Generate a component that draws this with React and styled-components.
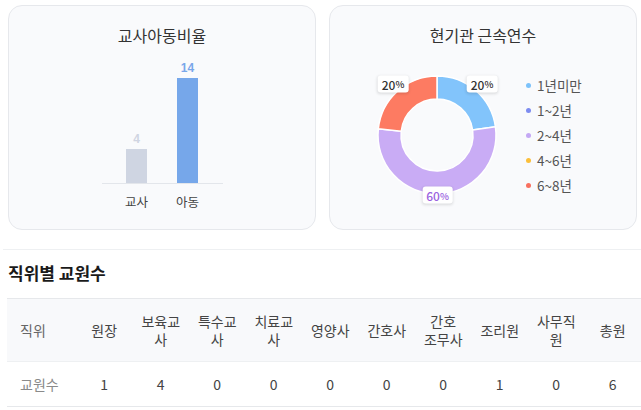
import React from "react";
import styled, { createGlobalStyle } from "styled-components";

const Global = createGlobalStyle`
  html, body { margin: 0; padding: 0; background: #ffffff; }
  body { font-family: "Noto Sans CJK KR", "Noto Sans", sans-serif; color: #333; }
  * { box-sizing: border-box; }
`;

const Page = styled.div`
  width: 641px;
  height: 410px;
  overflow: hidden;
  padding-top: 5px;
`;

const Cards = styled.div`
  display: grid;
  grid-template-columns: 308px 308px;
  gap: 13px;
  padding-left: 8px;
`;

const Card = styled.div`
  height: 225px;
  border: 1px solid #e6e8ec;
  border-radius: 14px;
  background: #f9fafc;
  padding-top: 17px;
  display: flex;
  flex-direction: column;
`;

const CardTitle = styled.div`
  font-size: 16px;
  line-height: 24px;
  text-align: center;
  color: #333;
`;

/* ---------- bar chart ---------- */
const BarArea = styled.div`
  margin: 0 auto;
  width: 121px;
  height: 137px;
  display: flex;
  justify-content: center;
  align-items: flex-end;
  gap: 30px;
  border-bottom: 1px solid #e3e6eb;
`;

const BarCol = styled.div`
  width: 21px;
  display: flex;
  flex-direction: column;
  align-items: center;
`;

const BarValue = styled.div`
  font-family: "Liberation Sans", Arial, sans-serif;
  font-weight: 700;
  font-size: 12px;
  line-height: 14px;
  margin-bottom: 3px;
  color: ${(p) => p.$color};
`;

const Bar = styled.div`
  width: 21px;
  height: ${(p) => p.$h}px;
  background: ${(p) => p.$color};
`;

const BarLabels = styled.div`
  margin: 9px auto 0;
  display: flex;
  justify-content: center;
  gap: 26px;
`;

const BarLabel = styled.div`
  width: 25px;
  text-align: center;
  font-size: 12.5px;
  line-height: 18px;
  color: #444;
`;

/* ---------- donut ---------- */
const DonutRow = styled.div`
  display: flex;
  align-items: center;
  margin-top: 13px;
  padding-left: 32px;
  gap: 14px;
`;

const ChartBox = styled.div`
  position: relative;
  width: 150px;
  height: 150px;
  flex: none;
`;

const PctTag = styled.div`
  position: absolute;
  transform: translate(-50%, -50%);
  background: #fff;
  border-radius: 3px;
  box-shadow: 0 1px 3px rgba(0, 0, 0, 0.12);
  padding: 0 4px;
  height: 17px;
  display: flex;
  align-items: center;
  font-size: 12px;
  font-weight: 500;
  color: ${(p) => p.$color || "#333"};
  white-space: nowrap;
  & small { font-size: 9.5px; font-weight: 500; }
`;

const Legend = styled.ul`
  list-style: none;
  margin: 0;
  padding: 0;
  display: flex;
  flex-direction: column;
  gap: 7px;
`;

const LegendItem = styled.li`
  display: flex;
  align-items: center;
  gap: 6px;
  font-size: 13.5px;
  line-height: 18px;
  color: #555;
`;

const Dot = styled.span`
  width: 5px;
  height: 5px;
  border-radius: 50%;
  background: ${(p) => p.$color};
`;

/* ---------- table section ---------- */
const Section = styled.section`
  margin-top: 19px;
  margin-left: 3px;
  border-top: 1px solid #eef0f2;
  padding: 11px 0 0 4px;
`;

const SectionTitle = styled.h3`
  margin: 0 0 13px 1px;
  font-size: 17px;
  line-height: 24px;
  font-weight: 700;
  color: #1a1a1a;
`;

const Table = styled.table`
  width: 634px;
  table-layout: fixed;
  border-collapse: collapse;
  font-size: 14px;
  line-height: 18px;
`;

const HeadRow = styled.tr`
  background: #f8f9fb;
  border-top: 1px solid #e6e8eb;
  border-bottom: 1px solid #eef0f2;
`;

const BodyRow = styled.tr`
  border-bottom: 1px solid #e6e8eb;
`;

const Th = styled.th`
  font-weight: 400;
  padding: 13px 6px;
  text-align: ${(p) => (p.$first ? "left" : "center")};
  padding-left: ${(p) => (p.$first ? "13px" : "6px")};
  color: ${(p) => (p.$first ? "#666" : "#444")};
  vertical-align: middle;
  word-break: ${(p) => (p.$keep ? "keep-all" : "normal")};
`;

const Td = styled.td`
  padding: 13px 6px;
  text-align: ${(p) => (p.$first ? "left" : "center")};
  padding-left: ${(p) => (p.$first ? "13px" : "6px")};
  color: ${(p) => (p.$first ? "#8a8a8a" : "#444")};
`;

const pt = (cx, cy, r, a) => {
  const rad = (a * Math.PI) / 180;
  return [cx + r * Math.sin(rad), cy - r * Math.cos(rad)];
};

const arc = (cx, cy, ro, ri, a0, a1) => {
  const large = a1 - a0 > 180 ? 1 : 0;
  const [x0, y0] = pt(cx, cy, ro, a0);
  const [x1, y1] = pt(cx, cy, ro, a1);
  const [x2, y2] = pt(cx, cy, ri, a1);
  const [x3, y3] = pt(cx, cy, ri, a0);
  return `M${x0} ${y0} A${ro} ${ro} 0 ${large} 1 ${x1} ${y1} L${x2} ${y2} A${ri} ${ri} 0 ${large} 0 ${x3} ${y3} Z`;
};

const slices = [
  { from: 0, to: 82, color: "#82c4fb" },
  { from: 82, to: 276, color: "#c9acf5" },
  { from: 276, to: 360, color: "#fd7b62" },
];

const legend = [
  { label: "1년미만", color: "#7cc2fa" },
  { label: "1~2년", color: "#7d8cf0" },
  { label: "2~4년", color: "#c4a8f4" },
  { label: "4~6년", color: "#fbbf3a" },
  { label: "6~8년", color: "#f8705f" },
];

const headers = ["직위", "원장", "보육교사", "특수교사", "치료교사", "영양사", "간호사", "간호 조무사", "조리원", "사무직원", "총원"];
const values = ["교원수", "1", "4", "0", "0", "0", "0", "0", "1", "0", "6"];

export default function App() {
  return (
    <Page>
      <Global />
      <Cards>
        <Card>
          <CardTitle>교사아동비율</CardTitle>
          <BarArea>
            <BarCol>
              <BarValue $color="#d0d5e2">4</BarValue>
              <Bar $h={34} $color="#cfd5e2" />
            </BarCol>
            <BarCol>
              <BarValue $color="#79a7ea">14</BarValue>
              <Bar $h={105} $color="#76a7ea" />
            </BarCol>
          </BarArea>
          <BarLabels>
            <BarLabel>교사</BarLabel>
            <BarLabel>아동</BarLabel>
          </BarLabels>
        </Card>
        <Card>
          <CardTitle>현기관 근속연수</CardTitle>
          <DonutRow>
            <ChartBox>
              <svg width="150" height="150" viewBox="0 0 150 150">
                {slices.map((s) => (
                  <path
                    key={s.from}
                    d={arc(75, 75, 59, 36, s.from, s.to)}
                    fill={s.color}
                    stroke="#ffffff"
                    strokeWidth="1.5"
                  />
                ))}
              </svg>
              <PctTag style={{ left: 120, top: 23.5 }}>
                20<small>%</small>
              </PctTag>
              <PctTag style={{ left: 31, top: 23.5 }}>
                20<small>%</small>
              </PctTag>
              <PctTag $color="#9a62e0" style={{ left: 75.5, top: 135 }}>
                60<small>%</small>
              </PctTag>
            </ChartBox>
            <Legend>
              {legend.map((l) => (
                <LegendItem key={l.label}>
                  <Dot $color={l.color} />
                  {l.label}
                </LegendItem>
              ))}
            </Legend>
          </DonutRow>
        </Card>
      </Cards>
      <Section>
        <SectionTitle>직위별 교원수</SectionTitle>
        <Table>
          <colgroup>
            <col style={{ width: 69 }} />
            {headers.slice(1).map((h) => (
              <col key={h} style={{ width: 56.5 }} />
            ))}
          </colgroup>
          <thead>
            <HeadRow>
              {headers.map((h, i) => (
                <Th key={h} $first={i === 0} $keep={h.includes(" ")}>
                  {h}
                </Th>
              ))}
            </HeadRow>
          </thead>
          <tbody>
            <BodyRow>
              {values.map((v, i) => (
                <Td key={i} $first={i === 0}>
                  {v}
                </Td>
              ))}
            </BodyRow>
          </tbody>
        </Table>
      </Section>
    </Page>
  );
}
